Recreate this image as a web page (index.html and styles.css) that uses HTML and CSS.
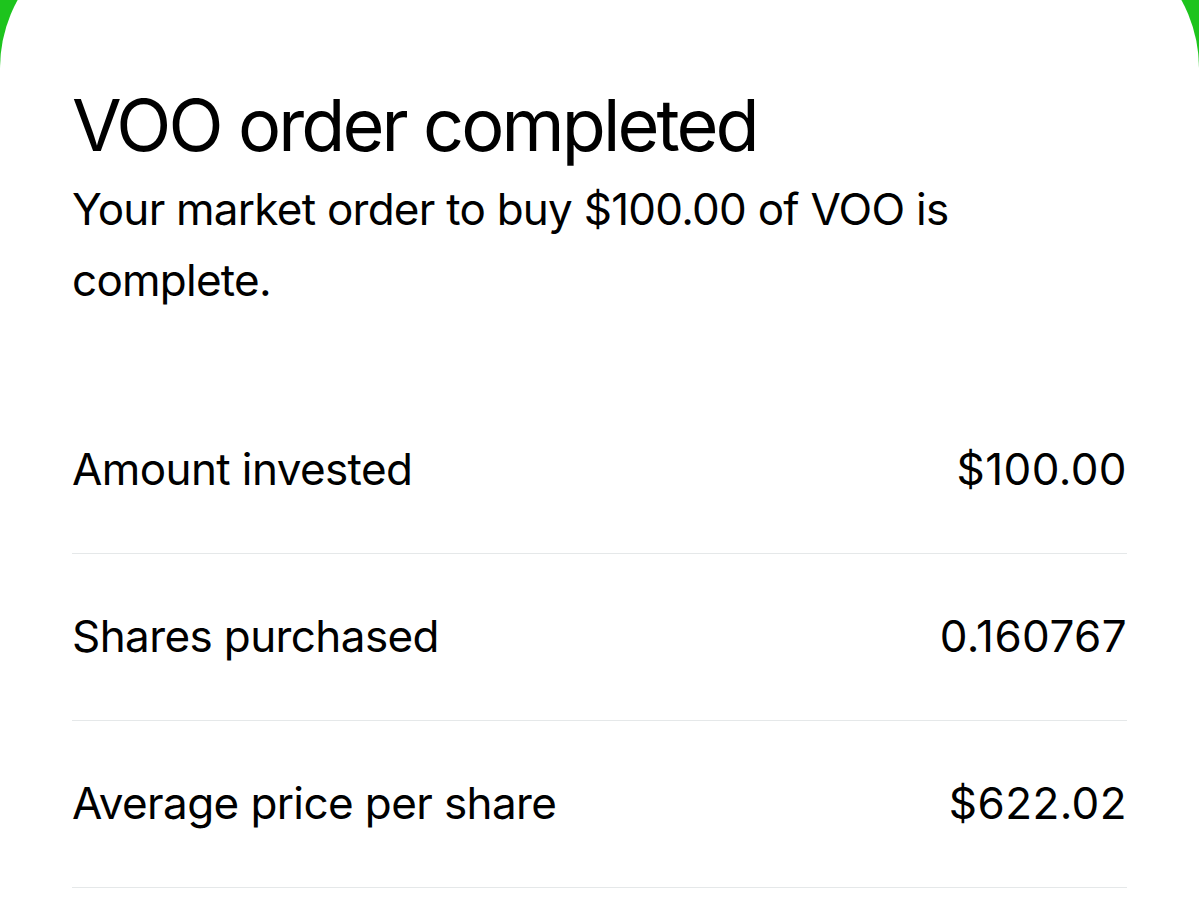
FILE: index.html
```html
<!DOCTYPE html>
<html lang="en">
<head>
<meta charset="utf-8">
<title>VOO order completed</title>
<link rel="stylesheet" href="styles.css">
</head>
<body>
<main class="sheet">
  <header class="head">
    <h1 class="title">VOO order completed</h1>
    <p class="subtitle">Your market order to buy $100.00 of VOO is complete.</p>
  </header>
  <ul class="details">
    <li class="row"><span class="label">Amount invested</span><span class="value">$100.00</span></li>
    <li class="row"><span class="label">Shares purchased</span><span class="value">0.160767</span></li>
    <li class="row"><span class="label">Average price per share</span><span class="value">$622.02</span></li>
  </ul>
</main>
</body>
</html>
```
FILE: styles.css
```css
html, body {
  margin: 0;
  padding: 0;
  height: 100%;
}
body {
  background: #1dc41d;
  overflow: hidden;
  font-family: Inter, "Liberation Sans", sans-serif;
  color: #000;
}
.sheet {
  background: #fff;
  margin: -72px 0 0 0;
  border-radius: 140px 140px 0 0;
  padding: 72px 72px 0 72px;
  height: 974px;
  box-sizing: border-box;
}
.head {
  padding-top: 82px;
  height: 387px;
  box-sizing: border-box;
}
.title {
  margin: 0;
  font-size: 72px;
  font-weight: 400;
  line-height: 86px;
  letter-spacing: -2.9px;
}
.subtitle {
  margin: 6px 0 0;
  font-size: 44px;
  line-height: 71px;
  letter-spacing: -0.75px;
}
.details {
  list-style: none;
  margin: 0;
  padding: 0;
}
.row {
  display: flex;
  justify-content: space-between;
  align-items: baseline;
  padding: 57px 0 59px;
  border-bottom: 1px solid #e5e8e9;
  font-size: 44px;
  line-height: 50px;
  letter-spacing: -0.6px;
}
.value {
  letter-spacing: 0.4px;
}
```
